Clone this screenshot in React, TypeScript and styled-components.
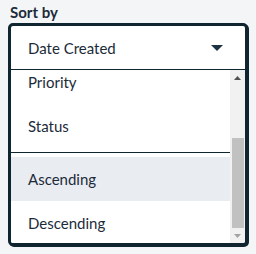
import React, { useEffect, useRef } from "react";
import styled, { createGlobalStyle } from "styled-components";

const Global = createGlobalStyle`
  html, body { margin: 0; padding: 0; background: #f4f5f7; }
  body { font-family: Lato, "Noto Sans", sans-serif; color: #1c2b39; }
`;

const Page = styled.div`
  width: 256px;
  height: 254px;
  box-sizing: border-box;
  padding: 2px 0 0 8px;
`;

const Label = styled.div`
  font-size: 15px;
  font-weight: 700;
  line-height: 20px;
  color: #1c2b39;
  margin-left: 2px;
  margin-bottom: 1px;
`;

const Box = styled.div`
  width: 240px;
  box-sizing: border-box;
  border: 3px solid #0f2530;
  border-radius: 5px;
  box-shadow: 1px 1px 0 #0f2530;
  background: #fff;
  overflow: hidden;
  display: flex;
  flex-direction: column;
`;

const Header = styled.div`
  height: 43px;
  border-bottom: 1px solid #0f2530;
  display: flex;
  align-items: center;
  justify-content: space-between;
  padding: 0 22px 0 17px;
  font-size: 15px;
`;

const Caret = styled.svg`
  width: 12px;
  height: 6px;
  display: block;
`;

const Body = styled.div`
  display: flex;
  height: 173px;
`;

const List = styled.div`
  flex: 1;
  overflow-y: scroll;
  scrollbar-width: none;
  &::-webkit-scrollbar { display: none; }
`;

const Pad = styled.div`
  padding: 4px 0;
`;

const Item = styled.div<{ $active?: boolean }>`
  height: 44px;
  display: flex;
  align-items: center;
  padding-left: 17px;
  font-size: 15px;
  background: ${(p) => (p.$active ? "#e9edf2" : "#fff")};
`;

const Sep = styled.div`
  height: 1px;
  background: #0f2530;
  margin: 4px 0;
`;

const Scrollbar = styled.div`
  width: 15px;
  background: #f1f1f1;
  display: flex;
  flex-direction: column;
`;

const Arrow = styled.div`
  height: 15px;
  display: flex;
  align-items: center;
  justify-content: center;
`;

const Track = styled.div`
  flex: 1;
  padding-top: 53px;
`;

const Thumb = styled.div`
  height: 90px;
  margin: 0 1px 0 2px;
  background: #c1c1c1;
`;

export default function App() {
  const ref = useRef<HTMLDivElement>(null);
  useEffect(() => {
    if (ref.current) ref.current.scrollTop = 102;
  }, []);
  return (
    <Page>
      <Global />
      <Label>Sort by</Label>
      <Box>
        <Header>
          <span>Date Created</span>
          <Caret viewBox="0 0 12 6">
            <path d="M0 0 H12 L6 6 Z" fill="#1d3343" />
          </Caret>
        </Header>
        <Body>
          <List ref={ref}>
            <Pad>
              <Item>Date Created</Item>
              <Item>Due Date</Item>
              <Item>Priority</Item>
              <Item>Status</Item>
              <Sep />
              <Item $active>Ascending</Item>
              <Item>Descending</Item>
            </Pad>
          </List>
          <Scrollbar>
            <Arrow>
              <svg width="7" height="4" viewBox="0 0 7 4">
                <path d="M0 4 L3.5 0 L7 4 Z" fill="#505050" />
              </svg>
            </Arrow>
            <Track>
              <Thumb />
            </Track>
            <Arrow>
              <svg width="7" height="4" viewBox="0 0 7 4">
                <path d="M0 0 H7 L3.5 4 Z" fill="#a3a3a3" />
              </svg>
            </Arrow>
          </Scrollbar>
        </Body>
      </Box>
    </Page>
  );
}
